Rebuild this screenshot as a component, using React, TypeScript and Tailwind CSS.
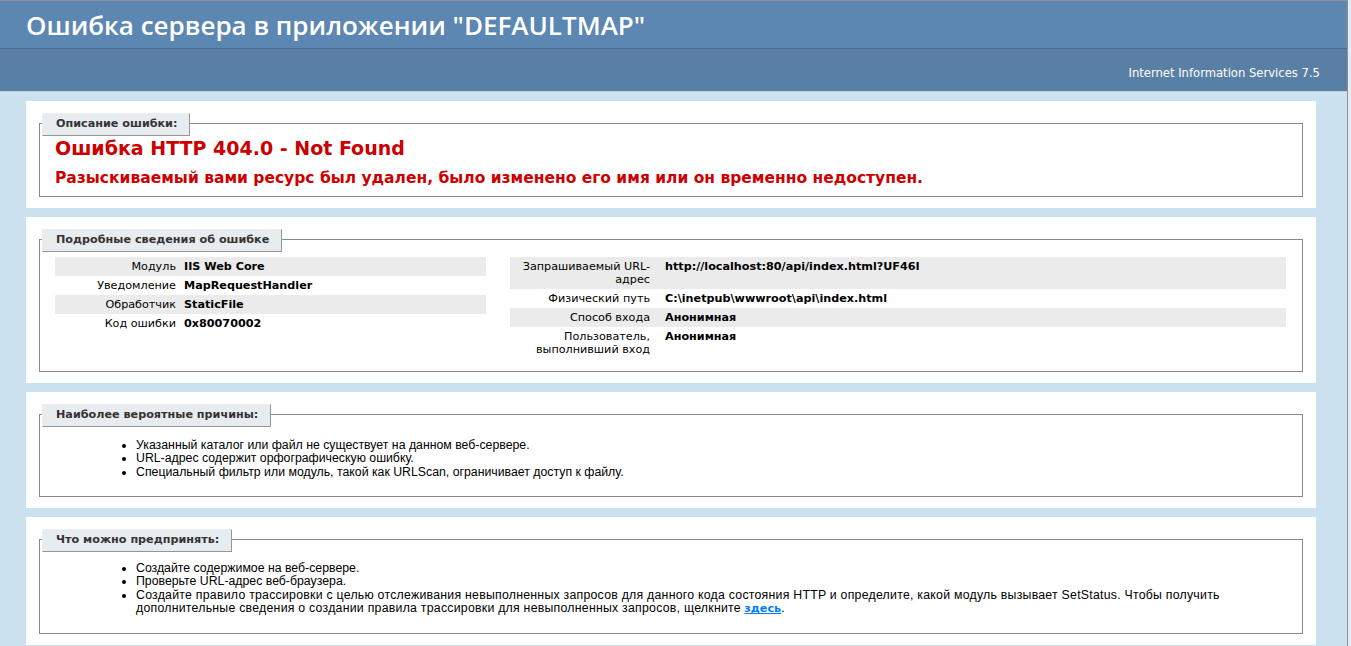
import React from "react";

type Row = { label: React.ReactNode; value: string };

const leftRows: Row[] = [
  { label: "Модуль", value: "IIS Web Core" },
  { label: "Уведомление", value: "MapRequestHandler" },
  { label: "Обработчик", value: "StaticFile" },
  { label: "Код ошибки", value: "0x80070002" },
];

const rightRows: Row[] = [
  { label: <>Запрашиваемый URL-<br />адрес</>, value: "http://localhost:80/api/index.html?UF46I" },
  { label: "Физический путь", value: "C:\\inetpub\\wwwroot\\api\\index.html" },
  { label: "Способ входа", value: "Анонимная" },
  { label: <>Пользователь,<br />выполнивший вход</>, value: "Анонимная" },
];

// one white panel with a fieldset-like frame inside
function Panel({ title, frame, children }: { title: string; frame: string; children: React.ReactNode }) {
  return (
    <div className="mt-[9px] w-[1290px] bg-white px-[13px] pt-[22px] pb-[11px]">
      <div className={"border border-[#8a8a8a] px-[15px] " + frame}>
        <div className="-mt-[11px] -ml-[13px] flex h-[23px] w-fit items-center border-t border-l border-t-[#EDEDED] border-l-[#EDEDED] border-r border-b border-r-[#969696] border-b-[#969696] bg-[#E7ECF0] pl-[13px] pr-[12px] font-bold text-[#333333]">
          {title}
        </div>
        {children}
      </div>
    </div>
  );
}

function DetailTable({ rows, thWidth, pr }: { rows: Row[]; thWidth: string; pr: string }) {
  return (
    <table className="w-full">
      <tbody>
        {rows.map((r, i) => (
          <tr key={i} className={i % 2 === 0 ? "bg-[#EBEBEB]" : ""}>
            <th className={"py-[3px] text-right align-top font-normal leading-[13px] " + thWidth + " " + pr}>{r.label}</th>
            <td className="py-[3px] align-top font-bold leading-[13px]">{r.value}</td>
          </tr>
        ))}
      </tbody>
    </table>
  );
}

export default function App() {
  const bullets = "list-disc pl-[81px] font-['Tahoma','Liberation_Sans',sans-serif] text-[12.3px] leading-[13.4px] text-black";

  return (
    <div className="min-h-screen bg-[#E4EBF1] font-['Verdana','DejaVu_Sans',sans-serif] text-[11.2px] text-black">
      <div className="min-h-screen w-[1348px] border-t border-r border-t-[#8f8f8f] border-r-[#8f8f8f] bg-[#CBE1EF]">
        <div className="flex h-[47px] items-center bg-[#5C87B2] pl-[26px]">
          <h1 className="font-['Open_Sans',sans-serif] text-[26px] font-semibold leading-none text-white">
            Ошибка сервера в приложении "DEFAULTMAP"
          </h1>
        </div>
        <div className="flex h-[44px] items-center justify-end border-t border-b border-t-[#4A6C8E] border-b-[#C1CFDD] bg-[#5A7FA5] pt-[8px] pr-[27px] text-[11.6px] text-white">
          Internet Information Services 7.5
        </div>

        <div className="pl-[26px]">
          <Panel title="Описание ошибки:" frame="h-[74px]">
            <h2 className="mt-[1px] text-[19px] font-bold leading-[22px] text-[#CC0000]">Ошибка HTTP 404.0 - Not Found</h2>
            <h3 className="mt-[9px] text-[15.5px] font-bold leading-[20px] text-[#CC0000]">
              Разыскиваемый вами ресурс был удален, было изменено его имя или он временно недоступен.
            </h3>
          </Panel>

          <Panel title="Подробные сведения об ошибке" frame="h-[133px]">
            <div className="mt-[5px] flex">
              <div className="mr-[24px] w-[431px]">
                <DetailTable rows={leftRows} thWidth="w-[129px]" pr="pr-[8px]" />
              </div>
              <div className="w-[776px]">
                <DetailTable rows={rightRows} thWidth="w-[155px]" pr="pr-[15px]" />
              </div>
            </div>
          </Panel>

          <Panel title="Наиболее вероятные причины:" frame="h-[83px]">
            <ul className={"mt-[12px] " + bullets}>
              <li>Указанный каталог или файл не существует на данном веб-сервере.</li>
              <li>URL-адрес содержит орфографическую ошибку.</li>
              <li>Специальный фильтр или модуль, такой как URLScan, ограничивает доступ к файлу.</li>
            </ul>
          </Panel>

          <Panel title="Что можно предпринять:" frame="h-[95px]">
            <ul className={"mt-[10px] " + bullets}>
              <li>Создайте содержимое на веб-сервере.</li>
              <li>Проверьте URL-адрес веб-браузера.</li>
              <li>
                <span className="tracking-[0.25px]">
                  Создайте правило трассировки с целью отслеживания невыполненных запросов для данного кода состояния HTTP и определите, какой модуль вызывает SetStatus. Чтобы получить
                </span>
                <br />
                <span className="tracking-[0.25px]">
                  дополнительные сведения о создании правила трассировки для невыполненных запросов, щелкните
                </span>{" "}
                <a href="#" className="font-['Verdana','DejaVu_Sans',sans-serif] text-[11.2px] font-bold text-[#007EFF] underline">здесь</a>.
              </li>
            </ul>
          </Panel>
        </div>
      </div>
    </div>
  );
}
